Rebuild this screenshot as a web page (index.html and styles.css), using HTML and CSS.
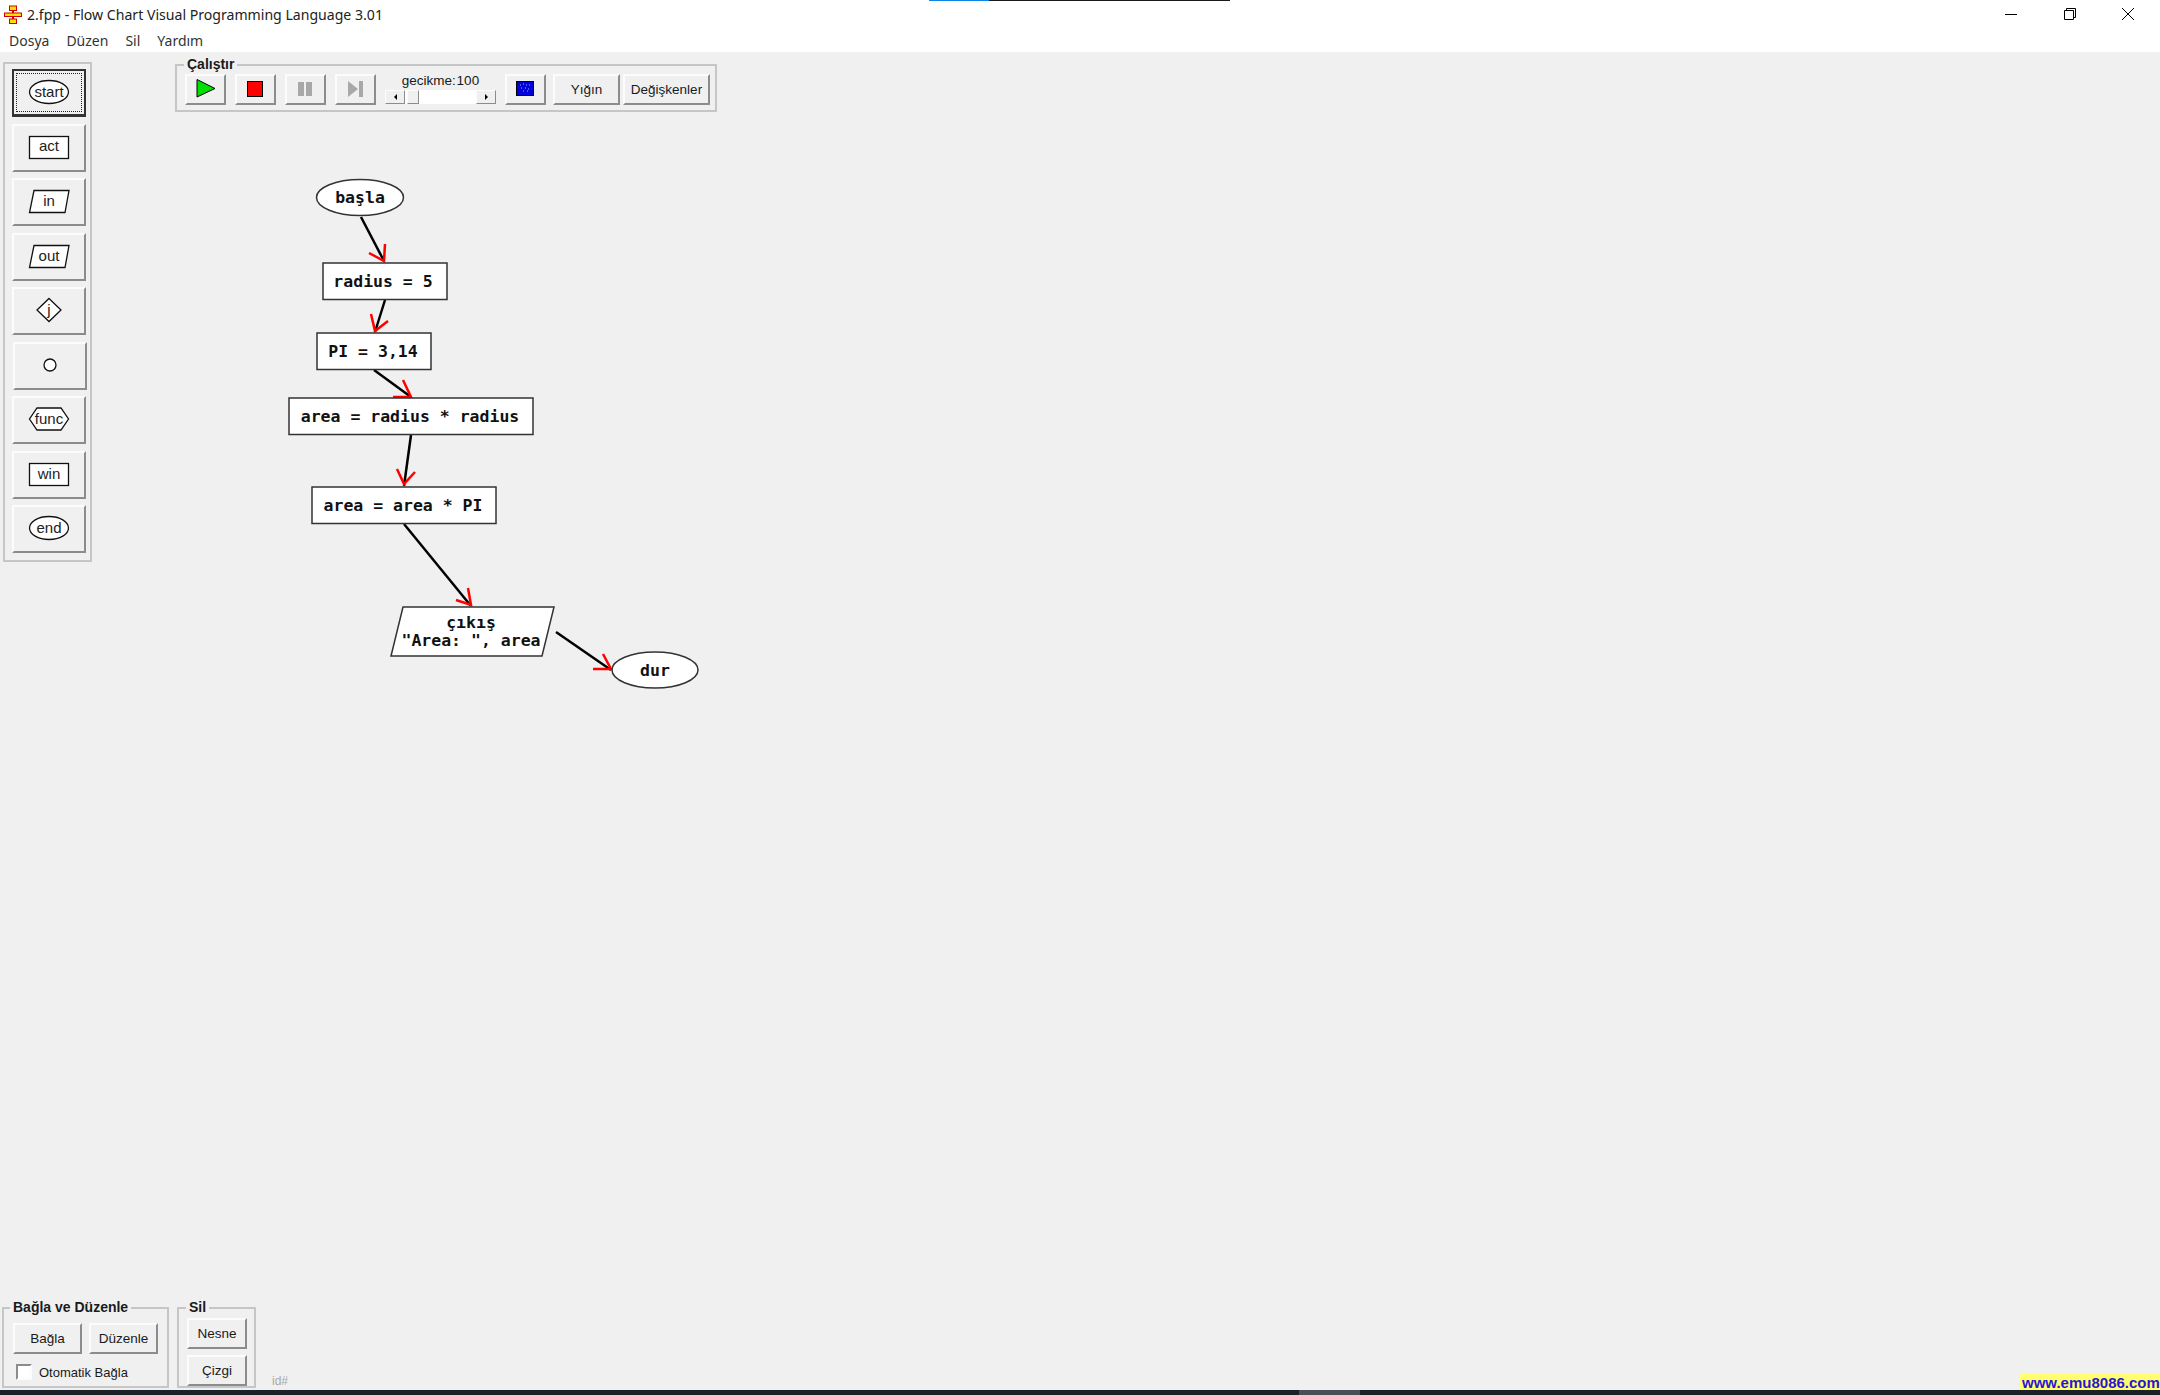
FILE: index.html

```html
<!DOCTYPE html>
<html lang="tr">
<head>
<meta charset="UTF-8" />
<meta name="viewport" content="width=device-width, initial-scale=1" />
<title>2.fpp - Flow Chart Visual Programming Language 3.01</title>
<link rel="stylesheet" href="styles.css">
</head>
<body>

<div class="load-line"><span class="load-line-done"></span></div>

<header class="titlebar">
  <svg class="app-icon" width="18" height="19" viewBox="0 0 18 19">
    <path d="M9 5v3M9 11v3" stroke="#d00000" stroke-width="2" />
    <rect x="5.500" y="1" width="7" height="4.500" fill="#ffe000" stroke="#d00000" />
    <rect x="0.500" y="8" width="17" height="3.500" fill="#ffe000" stroke="#d00000" />
    <rect x="5.500" y="14" width="7" height="4.500" fill="#ffe000" stroke="#d00000" />
  </svg>
  <span class="title-text">2.fpp - Flow Chart Visual Programming Language 3.01</span>
  <div class="window-controls">
    <svg width="14" height="14" viewBox="0 0 14 14"><path d="M1 7.500h12" stroke="#000" fill="none" /></svg>
    <svg width="14" height="14" viewBox="0 0 14 14"><path d="M1.500 3.500h9v9h-9zM3.500 3.500v-2h9v9h-2" stroke="#000" fill="none" /></svg>
    <svg width="14" height="14" viewBox="0 0 14 14"><path d="M1 1l12 12M13 1L1 13" stroke="#000" fill="none" /></svg>
  </div>
</header>

<nav class="menubar">
  <span>Dosya</span>
  <span>Düzen</span>
  <span>Sil</span>
  <span>Yardım</span>
</nav>

<main class="workspace">
  <div class="top-row">
    <!-- Nesne paleti -->
    <div class="group toolbox">
      <button class="btn tool-btn tool-focus">
        <span class="focus-box">
          <svg width="44" height="26" viewBox="0 0 44 26"><ellipse cx="22" cy="13" rx="19.500" ry="11.500" class="shape" /><text x="22" y="18" class="shape-label">start</text></svg>
        </span>
      </button>
      <button class="btn tool-btn">
        <svg width="44" height="26" viewBox="0 0 44 26"><rect x="2.500" y="2.500" width="39" height="22" class="shape" /><text x="22" y="17" class="shape-label">act</text></svg>
      </button>
      <button class="btn tool-btn">
        <svg width="44" height="26" viewBox="0 0 44 26"><polygon points="7,2.500 42,2.500 38,24.500 2.500,24.500" class="shape" /><text x="22" y="18" class="shape-label">in</text></svg>
      </button>
      <button class="btn tool-btn">
        <svg width="44" height="26" viewBox="0 0 44 26"><polygon points="7,2.500 42,2.500 38,24.500 2.500,24.500" class="shape" /><text x="22" y="18" class="shape-label">out</text></svg>
      </button>
      <button class="btn tool-btn">
        <svg width="44" height="26" viewBox="0 0 44 26"><polygon points="22,1.500 34,13 22,24.500 10,13" class="shape" /><text x="22" y="18" class="shape-label">j</text></svg>
      </button>
      <button class="btn tool-btn tool-shifted">
        <svg width="44" height="26" viewBox="0 0 44 26"><circle cx="22" cy="13" r="6" class="shape" /></svg>
      </button>
      <button class="btn tool-btn">
        <svg width="44" height="26" viewBox="0 0 44 26"><polygon points="10,2 34,2 41.500,13 34,24 10,24 2.500,13" class="shape" /><text x="22" y="18" class="shape-label">func</text></svg>
      </button>
      <button class="btn tool-btn">
        <svg width="44" height="26" viewBox="0 0 44 26"><rect x="2.500" y="2.500" width="39" height="22" class="shape" /><text x="22" y="18" class="shape-label">win</text></svg>
      </button>
      <button class="btn tool-btn">
        <svg width="44" height="26" viewBox="0 0 44 26"><ellipse cx="22" cy="13" rx="19.500" ry="11.500" class="shape" /><text x="22" y="18" class="shape-label">end</text></svg>
      </button>
    </div>

    <!-- Calistirma kontrolleri -->
    <div class="group run-group">
      <span class="group-title">Çalıştır</span>
      <button class="btn run-btn">
        <svg width="22" height="22" viewBox="0 0 22 22"><polygon points="3,1.500 21,10.500 3,19" fill="#00e000" stroke="#000" /></svg>
      </button>
      <button class="btn run-btn">
        <svg width="16" height="16" viewBox="0 0 16 16"><rect x="0.500" y="0.500" width="15" height="15" fill="#ff0000" stroke="#000" /></svg>
      </button>
      <button class="btn run-btn">
        <svg width="16" height="16" viewBox="0 0 16 16"><path d="M1 1h6v14H1zM9 1h6v14H9z" fill="#a8a8a8" /></svg>
      </button>
      <button class="btn run-btn">
        <svg width="16" height="16" viewBox="0 0 16 16"><path d="M1 0l10 8-10 8zM12 0h4v16h-4z" fill="#a8a8a8" /></svg>
      </button>
      <div class="delay">
        <span class="delay-label">gecikme: 100</span>
        <div class="slider">
          <span class="slider-arrow"><i class="arrow-left"></i></span>
          <span class="slider-track"><span class="slider-thumb"></span></span>
          <span class="slider-arrow"><i class="arrow-right"></i></span>
        </div>
      </div>
      <button class="btn run-btn screen-btn">
        <svg width="18" height="15" viewBox="0 0 18 15">
          <rect x="0.500" y="0.500" width="17" height="14" fill="#0000d8" stroke="#000" />
          <path d="M4 4h1M7 3h1M10 4h1M13 4h1M5 7h1M9 7h1M12 8h1M7 10h1M11 10h1" stroke="#9fb0ff" />
        </svg>
      </button>
      <button class="btn text-btn stack-btn">Yığın</button>
      <button class="btn text-btn vars-btn">Değişkenler</button>
    </div>
  </div>

  <div class="bottom-row">
    <div class="group connect-group">
      <span class="group-title">Bağla ve Düzenle</span>
      <div class="connect-btns">
        <button class="btn text-btn connect-btn">Bağla</button>
        <button class="btn text-btn connect-btn">Düzenle</button>
      </div>
      <label class="check-row"><span class="check-box"></span>Otomatik Bağla</label>
    </div>
    <div class="group delete-group">
      <span class="group-title">Sil</span>
      <button class="btn text-btn delete-btn">Nesne</button>
      <button class="btn text-btn delete-btn">Çizgi</button>
    </div>
    <span class="id-label">id#</span>
    <a class="emu-link">www.emu8086.com</a>
  </div>
</main>

<div class="taskbar"><span class="task-active"></span></div>

<!-- Akis semasi -->
<svg class="diagram" width="2160" height="1395" viewBox="0 0 2160 1395">
  <g class="wires">
    <path d="M361 217L384 261" />
    <path d="M385 300L375 332" />
    <path d="M374 370L411 397" />
    <path d="M411 435L404 486" />
    <path d="M404 524L471 606" />
    <path d="M556 632L611 670" />
  </g>
  <g class="heads">
    <path d="M369 253L384 261L385 244" />
    <path d="M371 314L375 331L388 321" />
    <path d="M393 397L411 397L403 380" />
    <path d="M397 469L404 484L415 472" />
    <path d="M456 600L471 605L468 588" />
    <path d="M593 669L611 669L603 654" />
  </g>
  <g class="nodes">
    <ellipse cx="360" cy="197.500" rx="43.500" ry="18" />
    <rect x="323" y="263" width="124" height="36.500" />
    <rect x="317" y="333" width="114" height="36.500" />
    <rect x="289" y="398" width="244" height="36.500" />
    <rect x="312" y="487" width="184" height="36.500" />
    <polygon points="403,607 554,607 542,656 391,656" />
    <ellipse cx="655" cy="670" rx="43" ry="18" />
  </g>
  <g class="node-labels">
    <text x="360" y="203">başla</text>
    <text x="383" y="287">radius = 5</text>
    <text x="373" y="357">PI = 3,14</text>
    <text x="410" y="422">area = radius * radius</text>
    <text x="403" y="511">area = area * PI</text>
    <text x="471" y="628">çıkış</text>
    <text x="471" y="646">"Area: ", area</text>
    <text x="655" y="676">dur</text>
  </g>
</svg>

</body>
</html>
```

FILE: styles.css

```css
* {
  box-sizing: border-box;
}
body {
  position: relative;
  display: flex;
  flex-direction: column;
  width: 2160px;
  height: 1395px;
  margin: 0;
  overflow: hidden;
  background: #f0f0f0;
  color: #1a1a1a;
  font-family: "Liberation Sans", Arial, sans-serif;
  font-size: 14px;
}
.load-line {
  position: absolute;
  top: 0;
  left: 929px;
  width: 301px;
  height: 1px;
  background: #1a1a1a;
}
.load-line-done {
  display: block;
  width: 60px;
  height: 1px;
  background: #0a84e8;
}
.titlebar {
  display: flex;
  align-items: center;
  flex: none;
  height: 26px;
  padding: 2px 0 0 4px;
  background: #fff;
}
.title-text {
  margin-left: 5px;
  font-family: "Noto Sans", sans-serif;
  font-size: 14.100px;
  color: #222;
  white-space: nowrap;
}
.window-controls {
  display: flex;
  gap: 44.500px;
  margin-left: auto;
  padding-right: 25px;
}
.menubar {
  display: flex;
  align-items: center;
  gap: 17px;
  flex: none;
  height: 26px;
  padding: 2px 0 0 9px;
  background: #fff;
  font-family: "Noto Sans", sans-serif;
  font-size: 14px;
  color: #333;
}
.workspace {
  display: flex;
  flex-direction: column;
  justify-content: space-between;
  flex: 1;
  min-height: 0;
}
.top-row {
  display: flex;
  align-items: flex-start;
  gap: 83px;
  padding: 10px 0 0 3px;
}
.bottom-row {
  display: flex;
  align-items: flex-end;
  gap: 8px;
  height: 81px;
  margin-bottom: 2px;
  padding-left: 2px;
}
.group {
  position: relative;
  flex: none;
  border: 2px solid #c6c6c6;
}
.group-title {
  position: absolute;
  top: -10px;
  left: 7px;
  padding: 0 3px;
  background: #f0f0f0;
  font-weight: 700;
  line-height: 16px;
  white-space: nowrap;
}
.btn {
  display: flex;
  align-items: center;
  justify-content: center;
  flex: none;
  padding: 0;
  background: #f0f0f0;
  border: 2px solid;
  border-color: #fcfcfc #8c8c8c #8c8c8c #fcfcfc;
  border-radius: 0;
  color: #1a1a1a;
  font-family: "Liberation Sans", Arial, sans-serif;
  font-size: 13.500px;
}
/* Paleti */
.toolbox {
  display: flex;
  flex-direction: column;
  gap: 6.500px;
  width: 89px;
  height: 500px;
  padding: 5px 0 0 7px;
}
.tool-btn {
  width: 74px;
  height: 48px;
}
.tool-btn svg {
  margin: 0 1px 2px 0;
}
.tool-shifted {
  margin-left: 1px;
}
.tool-focus {
  border-color: #333;
  border-width: 2px 2px 3px 2px;
}
.focus-box {
  display: flex;
  align-items: center;
  justify-content: center;
  width: 66px;
  height: 39px;
  border: 1px dotted #222;
}
.shape {
  fill: #fff;
  stroke: #111;
  stroke-width: 1.300;
}
.shape-label {
  font-family: "Liberation Sans", Arial, sans-serif;
  font-size: 15px;
  text-anchor: middle;
  fill: #222;
}
/* Calistir */
.run-group {
  display: flex;
  align-items: flex-start;
  width: 542px;
  height: 48px;
  margin-top: 2px;
  padding: 8px 0 0 8px;
}
.run-btn {
  width: 41px;
  height: 31px;
  margin-right: 9px;
}
.run-btn svg {
  margin: 0 2px 2px 0;
}
.screen-btn {
  margin-right: 7px;
}
.text-btn {
  height: 31px;
}
.stack-btn {
  width: 67px;
  margin-right: 3px;
}
.vars-btn {
  width: 87px;
}
.delay {
  display: flex;
  flex-direction: column;
  align-items: center;
  width: 111px;
  margin: -3px 9px 0 0;
}
.delay-label {
  font-size: 13.500px;
  line-height: 19px;
  word-spacing: -3px;
}
.slider {
  display: flex;
  width: 100%;
  height: 14px;
}
.slider-arrow {
  display: flex;
  align-items: center;
  justify-content: center;
  width: 20px;
  background: #f0f0f0;
  border: 1px solid;
  border-color: #fcfcfc #8c8c8c #8c8c8c #fcfcfc;
}
.slider-track {
  flex: 1;
  padding-left: 2px;
  background: #fff;
}
.slider-thumb {
  display: block;
  width: 12px;
  height: 14px;
  background: #f0f0f0;
  border: 1px solid;
  border-color: #fcfcfc #8c8c8c #8c8c8c #fcfcfc;
}
.arrow-left,
.arrow-right {
  width: 0;
  height: 0;
  border-top: 3px solid transparent;
  border-bottom: 3px solid transparent;
}
.arrow-left {
  border-right: 3px solid #000;
}
.arrow-right {
  border-left: 3px solid #000;
}
/* Alt kisim */
.connect-group {
  width: 167px;
  height: 81px;
  padding: 14px 0 0 9px;
}
.connect-group .group-title {
  left: 6px;
}
.connect-btns {
  display: flex;
  gap: 7px;
}
.connect-btn {
  width: 69px;
  height: 31px;
}
.check-row {
  display: flex;
  align-items: center;
  gap: 7px;
  margin: 10px 0 0 3px;
  font-size: 13px;
  white-space: nowrap;
}
.check-box {
  width: 16px;
  height: 16px;
  background: #fff;
  border: 2px solid;
  border-color: #8c8c8c #fcfcfc #fcfcfc #8c8c8c;
}
.delete-group {
  display: flex;
  flex-direction: column;
  gap: 6px;
  width: 79px;
  height: 81px;
  padding: 9px 0 0 8px;
}
.delete-btn {
  width: 60px;
  height: 31px;
}
.id-label {
  margin: 0 0 0 8px;
  font-size: 12px;
  color: #a8a8a8;
}
.emu-link {
  margin: 0 0 -2px auto;
  padding: 0 0 0 3px;
  width: 141px;
  height: 16px;
  background: #ffff70;
  color: #2a14d8;
  font-family: "Liberation Sans", Arial, sans-serif;
  font-size: 15px;
  font-weight: 700;
  line-height: 17px;
  white-space: nowrap;
  overflow: hidden;
}
.taskbar {
  display: flex;
  flex: none;
  height: 5px;
  padding-left: 1299px;
  background: #1b2129;
}
.task-active {
  width: 61px;
  background: #4a4f57;
}
/* Sema */
.diagram {
  position: absolute;
  top: 0;
  left: 0;
  pointer-events: none;
}
.wires path {
  fill: none;
  stroke: #000;
  stroke-width: 2.500;
}
.heads path {
  fill: none;
  stroke: #ff0000;
  stroke-width: 2.500;
}
.nodes ellipse,
.nodes rect,
.nodes polygon {
  fill: #fff;
  stroke: #333;
  stroke-width: 1.500;
}
.node-labels text {
  fill: #111;
  font-family: "DejaVu Sans Mono", monospace;
  font-size: 16.500px;
  font-weight: 700;
  text-anchor: middle;
  white-space: pre;
}
```
